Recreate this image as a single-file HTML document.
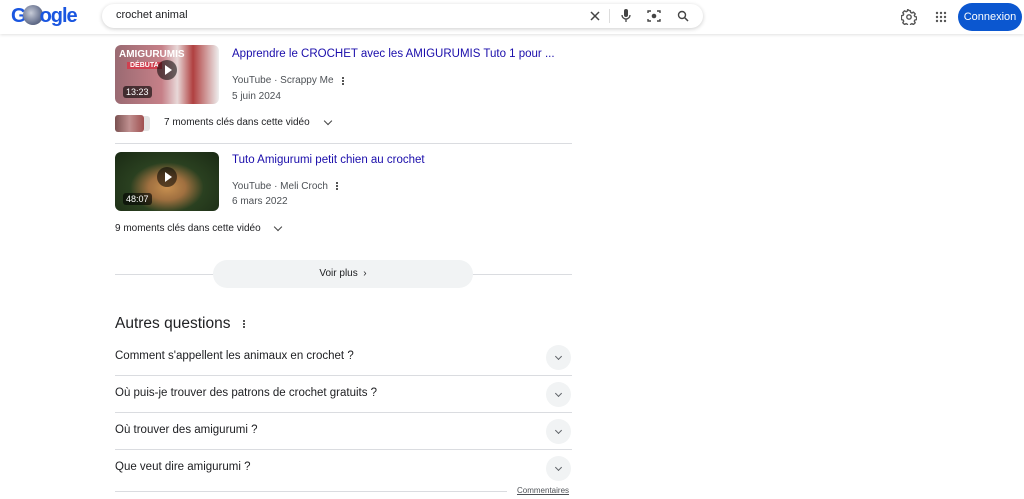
<!DOCTYPE html>
<html><head><meta charset="utf-8"><style>
*{margin:0;padding:0;box-sizing:border-box}
body{width:1024px;height:499px;overflow:hidden;background:#fff;font-family:"Liberation Sans",Arial,sans-serif;color:#202124;position:relative}
.hdr{position:absolute;left:0;top:0;width:1024px;height:34px;background:#fff;box-shadow:0 1px 3px rgba(0,0,0,.12)}
.logo{position:absolute;left:11px;top:5px;font-size:20px;font-weight:bold;color:#1a56e0;letter-spacing:-1px}
.logo .o{display:inline-block;width:20px;height:20px;border-radius:50%;background:radial-gradient(circle at 40% 40%,#c8ccd8,#6a7490 60%,#3a4260);vertical-align:-3px;margin:0 -3px}
.sb{position:absolute;left:102px;top:4px;width:601px;height:24px;border-radius:12px;background:#fff;box-shadow:0 1px 4px rgba(0,0,0,.2)}
.sb .q{position:absolute;left:14px;top:5px;font-size:11px}
.abs{position:absolute}
.t{position:absolute;font-size:11.5px;color:#1a0dab}
.m{position:absolute;font-size:10px;color:#4d5156}
.th{position:absolute;border-radius:6px;overflow:hidden}
.play{position:absolute;left:42px;top:15px;width:20px;height:20px;border-radius:50%;background:rgba(0,0,0,.55)}
.play:after{content:"";position:absolute;left:8px;top:5px;border-left:7px solid #fff;border-top:5px solid transparent;border-bottom:5px solid transparent}
.dur{position:absolute;left:8px;bottom:6px;font-size:9px;color:#fff;background:rgba(0,0,0,.6);padding:1px 3px;border-radius:3px}
.line{position:absolute;height:1px;background:#dadce0}
.qq{position:absolute;left:115px;font-size:11.5px;color:#202124}
.cv{position:absolute;left:546px;width:25px;height:25px;border-radius:50%;background:#f1f3f4}
.cv:after{content:"";position:absolute;left:10px;top:9px;width:4px;height:4px;border-right:1px solid #5f6368;border-bottom:1px solid #5f6368;transform:rotate(45deg)}
.chev{position:absolute;width:6px;height:6px;border-right:1.5px solid #444;border-bottom:1.5px solid #444;transform:rotate(45deg)}
.dots{position:absolute;width:2px;height:2px;background:#555;box-shadow:0 3px 0 #555,0 6px 0 #555}
</style></head><body>
<div class="hdr">
<div class="logo">G<span class="o"></span>ogle</div>
<div class="sb"><span class="q">crochet animal</span>
<svg class="abs" style="left:487px;top:6px" width="12" height="12" viewBox="0 0 12 12"><path d="M2 2L10 10M10 2L2 10" stroke="#444" stroke-width="1.5"/></svg>
<div class="abs" style="left:507px;top:5px;width:1px;height:14px;background:#ddd"></div>
<svg class="abs" style="left:518px;top:5px" width="12" height="14" viewBox="0 0 12 14"><rect x="4" y="0" width="4" height="8" rx="2" fill="#444"/><path d="M2 6a4 4 0 0 0 8 0M6 10v3" stroke="#444" stroke-width="1.3" fill="none"/></svg>
<svg class="abs" style="left:545px;top:5px" width="14" height="14" viewBox="0 0 14 14"><path d="M1 4V2h3M10 2h3v2M13 10v2h-3M4 12H1v-2" stroke="#444" stroke-width="1.4" fill="none"/><circle cx="7" cy="7" r="2.3" fill="#444"/></svg>
<svg class="abs" style="left:575px;top:6px" width="12" height="12" viewBox="0 0 12 12"><circle cx="5" cy="5" r="3.5" stroke="#444" stroke-width="1.4" fill="none"/><path d="M7.5 7.5L11 11" stroke="#444" stroke-width="1.5"/></svg>
</div>
<svg class="abs" style="left:901px;top:9px" width="16" height="16" viewBox="0 0 16 16"><path d="M8 1.5l1.3.2.4 1.7 1.2.6 1.5-.9 1.8 1.8-.9 1.5.6 1.2 1.7.4v2.6l-1.7.4-.6 1.2.9 1.5-1.8 1.8-1.5-.9-1.2.6-.4 1.7H6.7l-.4-1.7-1.2-.6-1.5.9-1.8-1.8.9-1.5-.6-1.2-1.7-.4V6.7l1.7-.4.6-1.2-.9-1.5 1.8-1.8 1.5.9 1.2-.6.4-1.7z" stroke="#555" stroke-width="1.4" fill="none" stroke-linejoin="round"/><circle cx="8" cy="8" r="2.2" stroke="#555" stroke-width="1.4" fill="none"/></svg>
<svg class="abs" style="left:935px;top:11px" width="12" height="12" viewBox="0 0 12 12"><g fill="#555"><circle cx="2" cy="2" r="1.2"/><circle cx="6" cy="2" r="1.2"/><circle cx="10" cy="2" r="1.2"/><circle cx="2" cy="6" r="1.2"/><circle cx="6" cy="6" r="1.2"/><circle cx="10" cy="6" r="1.2"/><circle cx="2" cy="10" r="1.2"/><circle cx="6" cy="10" r="1.2"/><circle cx="10" cy="10" r="1.2"/></g></svg>
<div class="abs" style="left:958px;top:3px;width:64px;height:28px;border-radius:14px;background:#0b57d0;color:#fff;font-size:11px;text-align:center;line-height:28px">Connexion</div>
</div>

<div class="th" style="left:115px;top:45px;width:104px;height:59px;background:linear-gradient(90deg,#9a6a72 0%,#c68088 45%,#e8d8d8 60%,#b04040 75%,#eee 100%)">
<div class="abs" style="left:4px;top:4px;font-size:10px;font-weight:bold;color:#fff">AMIGURUMIS</div>
<div class="abs" style="left:12px;top:17px;font-size:7px;font-weight:bold;color:#fff;background:#d04050;padding:0 3px">DÉBUTA</div>
<div class="play"></div><div class="dur">13:23</div></div>
<div class="t" style="left:232px;top:48px">Apprendre le CROCHET avec les AMIGURUMIS Tuto 1 pour ...</div>
<div class="m" style="left:232px;top:75px">YouTube · Scrappy Me</div>
<div class="dots" style="left:342px;top:77px"></div>
<div class="m" style="left:232px;top:91px">5 juin 2024</div>
<div class="th" style="left:115px;top:115px;width:29px;height:17px;border-radius:3px;background:linear-gradient(90deg,#7a5050,#c09090 50%,#a05050)"></div>
<div class="abs" style="left:144px;top:116px;width:6px;height:15px;background:#e4e4e4;border-radius:0 3px 3px 0"></div>
<div class="m" style="left:164px;top:117px;color:#202124">7 moments clés dans cette vidéo</div>
<div class="chev" style="left:325px;top:118px"></div>
<div class="line" style="left:115px;top:143px;width:457px"></div>

<div class="th" style="left:115px;top:152px;width:104px;height:59px;background:radial-gradient(ellipse at 50% 60%,#c89050 0%,#a07040 25%,#2a4020 50%,#1a2a14 100%)">
<div class="play"></div><div class="dur">48:07</div></div>
<div class="t" style="left:232px;top:154px">Tuto Amigurumi petit chien au crochet</div>
<div class="m" style="left:232px;top:181px">YouTube · Meli Croch</div>
<div class="dots" style="left:336px;top:182px"></div>
<div class="m" style="left:232px;top:196px">6 mars 2022</div>
<div class="m" style="left:115px;top:223px;color:#202124">9 moments clés dans cette vidéo</div>
<div class="chev" style="left:275px;top:224px"></div>

<div class="line" style="left:115px;top:274px;width:457px"></div>
<div class="abs" style="left:213px;top:260px;width:260px;height:28px;border-radius:14px;background:#f1f3f4;font-size:10px;text-align:center;line-height:28px">Voir plus &nbsp;›</div>

<div class="abs" style="left:115px;top:315px;font-size:15.5px">Autres questions</div>
<div class="dots" style="left:243px;top:320px"></div>

<div class="qq" style="top:350px">Comment s'appellent les animaux en crochet ?</div><div class="cv" style="top:345px"></div>
<div class="line" style="left:115px;top:375px;width:457px"></div>
<div class="qq" style="top:387px">Où puis-je trouver des patrons de crochet gratuits ?</div><div class="cv" style="top:382px"></div>
<div class="line" style="left:115px;top:412px;width:457px"></div>
<div class="qq" style="top:424px">Où trouver des amigurumi ?</div><div class="cv" style="top:419px"></div>
<div class="line" style="left:115px;top:449px;width:457px"></div>
<div class="qq" style="top:461px">Que veut dire amigurumi ?</div><div class="cv" style="top:456px"></div>
<div class="line" style="left:115px;top:491px;width:392px"></div>
<div class="abs" style="left:517px;top:486px;font-size:8px;color:#4d5156;text-decoration:underline">Commentaires</div>
</body></html>
